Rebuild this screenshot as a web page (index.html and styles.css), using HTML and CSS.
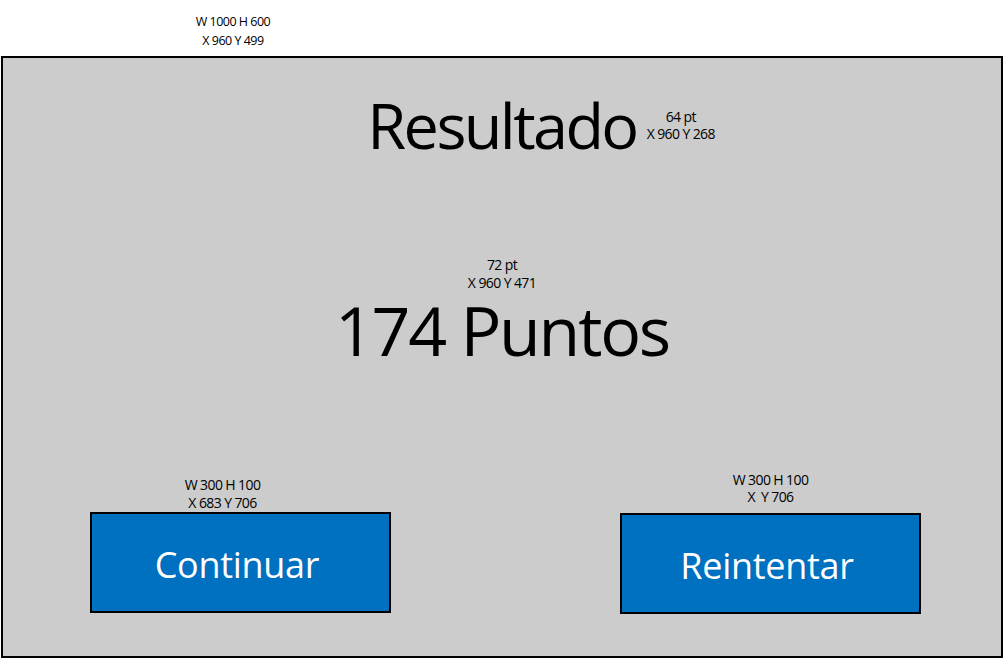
FILE: index.html
```html
<!DOCTYPE html>
<html lang="es">
<head>
<meta charset="utf-8">
<title>Resultado</title>
<link rel="stylesheet" href="styles.css">
</head>
<body>
<div class="page">
  <div class="note top-note">W 1000 H 600<br>X 960 Y 499</div>
  <main class="frame">
    <div class="title-row">
      <span></span>
      <h1 class="title">Resultado</h1>
      <div class="note title-note">64 pt<br>X 960 Y 268</div>
    </div>
    <div class="score-block">
      <div class="note">72 pt<br>X 960 Y 471</div>
      <div class="score">174 Puntos</div>
    </div>
    <div class="buttons">
      <div class="btn-group left">
        <div class="note left-note">W 300 H 100<br>X 683 Y 706</div>
        <button class="btn">Continuar</button>
      </div>
      <div class="btn-group right">
        <div class="note right-note">W 300 H 100<br>X&nbsp; Y 706</div>
        <button class="btn">Reintentar</button>
      </div>
    </div>
  </main>
</div>
</body>
</html>
```

FILE: styles.css
```css
* { box-sizing: border-box; }
html, body { margin: 0; padding: 0; background: #fff; }
body {
  font-family: "Open Sans", "Noto Sans", sans-serif;
  color: #000;
  width: 1003px;
  height: 658px;
  overflow: hidden;
}
.page {
  display: flex;
  flex-direction: column;
  padding-top: 12px;
}
.note {
  font-size: 14px;
  line-height: 18px;
  text-align: center;
  letter-spacing: -0.6px;
}
.top-note {
  width: 120px;
  margin-left: 173px;
  height: 44px;
  font-size: 12.5px;
  letter-spacing: -0.5px;
  line-height: 19px;
}
.frame {
  margin-left: 1px;
  width: 1002px;
  height: 602px;
  border: 2px solid #000;
  background: #cccccc;
  display: flex;
  flex-direction: column;
}
.title-row {
  display: grid;
  grid-template-columns: 1fr auto 1fr;
  align-items: start;
  padding-top: 22px;
}
.title {
  margin: 0;
  font-weight: 400;
  font-size: 63px;
  line-height: 90px;
  letter-spacing: -2.6px;
}
.title-note {
  justify-self: start;
  margin-left: 10px;
  margin-top: 28px;
  line-height: 17px;
}
.score-block {
  display: flex;
  flex-direction: column;
  align-items: center;
  margin-top: 86px;
}
.score {
  font-size: 68px;
  line-height: 76px;
  letter-spacing: -2.2px;
}
.buttons {
  display: flex;
  justify-content: space-between;
  padding: 0 80px 0 87px;
  margin-top: 108px;
}
.btn-group {
  display: flex;
  flex-direction: column;
  align-items: center;
}
.btn-group.right { margin-top: -5px; }
.left-note { margin-left: -36px; }
.right-note { line-height: 17px; margin-bottom: 8px; }
.btn {
  width: 301px;
  height: 101px;
  border: 2px solid #000;
  background: #0070c0;
  color: #fff;
  font-family: "Open Sans", "Noto Sans", sans-serif;
  font-size: 36px;
  letter-spacing: -0.3px;
  padding: 4px 7px 0 0;
  cursor: pointer;
}
```
